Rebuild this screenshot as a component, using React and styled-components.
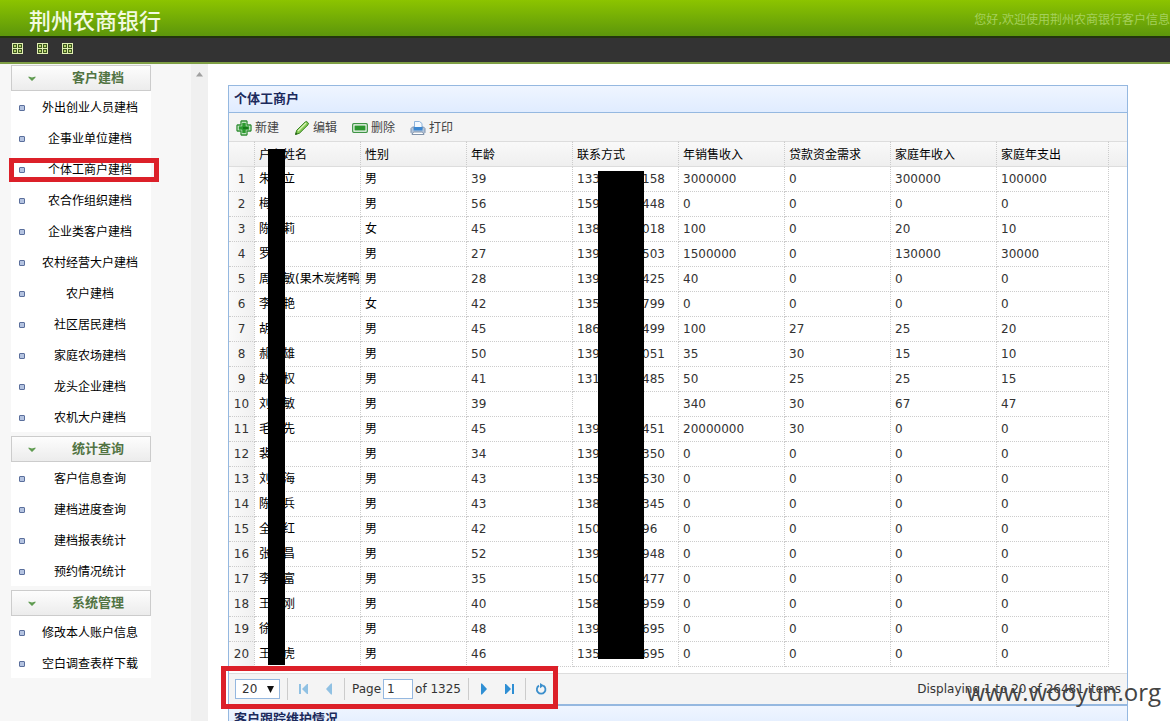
import React from "react";
import styled, { createGlobalStyle, css } from "styled-components";

const GlobalStyle = createGlobalStyle`
  *, *::before, *::after { box-sizing: border-box; }
  html, body, #root { height: 100%; }
  body {
    margin: 0;
    overflow: hidden;
    background: #fff;
    color: #000;
    font-family: "DejaVu Sans", "Noto Sans CJK SC", sans-serif;
    font-size: 12px;
    line-height: 16px;
  }
  button, input, select { font: inherit; color: inherit; }
`;

const Page = styled.div`
  position: relative;
  display: flex;
  flex-direction: column;
  height: 100%;
`;

const Banner = styled.header`
  display: flex;
  align-items: center;
  justify-content: space-between;
  height: 36px;
  padding-left: 29px;
  padding-top: 4px;
  flex: none;
  background: linear-gradient(#8cc400, #5c960b);
  white-space: nowrap;
`;

const Brand = styled.h1`
  margin: 0;
  padding-top: 4px;
  font-size: 22px;
  font-weight: 500;
  line-height: 24px;
  color: #f2fae0;
`;

const Greeting = styled.span`
  color: #a5d05c;
`;

const Strip = styled.nav`
  display: flex;
  align-items: center;
  gap: 14px;
  height: 28px;
  padding-left: 12px;
  padding-bottom: 3px;
  flex: none;
  background: #333;
  border-top: 2px solid #22340f;
  border-bottom: 2px solid #7f9f45;
`;

const IconButton = styled.button`
  display: flex;
  padding: 0;
  border: 0;
  background: none;
  cursor: pointer;
`;

const Body = styled.div`
  display: flex;
  flex: 1;
  min-height: 0;
`;

const Sidebar = styled.aside`
  display: flex;
  flex-direction: column;
  gap: 4px;
  width: 191px;
  padding: 1px 40px 0 11px;
  flex: none;
  background: #f7f7f7;
`;

const ScrollTrack = styled.div`
  display: flex;
  justify-content: center;
  width: 17px;
  padding-top: 8px;
  flex: none;
  background: #f0f0f0;
`;

const GroupHeader = styled.button`
  display: flex;
  align-items: center;
  gap: 36px;
  width: 100%;
  height: 26px;
  padding: 0 0 0 16px;
  border: 1px solid #ccc;
  background: linear-gradient(#fdfdfd, #ececec);
  color: #527443;
  font-size: 13px;
  font-weight: bold;
  text-align: left;
`;

const MenuList = styled.ul`
  margin: 0;
  padding: 0;
  list-style: none;
  background: #fff;
`;

const MenuItem = styled.li`
  position: relative;
  display: flex;
  align-items: center;
  height: 31px;
  padding-top: 2px;
  padding-left: 8px;
`;

const Bullet = styled.span`
  width: 6px;
  height: 6px;
  border: 1px solid #5b6f9c;
  border-radius: 1px;
  background: #b4c3e0;
`;

const MenuLink = styled.a`
  flex: 1;
  padding-left: 4px;
  color: #000;
  text-align: center;
  text-decoration: none;
`;

const highlight = css`
  position: absolute;
  border: 5px solid #dc2029;
  pointer-events: none;
`;

const MenuHighlight = styled.span`
  ${highlight}
  top: 5px;
  left: -2px;
  width: 150px;
  height: 24px;
`;

const PagerHighlight = styled.span`
  ${highlight}
  top: -8px;
  left: -8px;
  width: 337px;
  height: 43px;
`;

const Main = styled.main`
  flex: 1;
  min-width: 0;
  padding: 21px 42px 0 20px;
`;

const Panel = styled.section`
  border: 1px solid #95b8e0;
  border-top-width: ${(p) => (p.$joined ? 0 : 1)}px;
`;

const PanelTitle = styled.h2`
  height: 27px;
  margin: 0;
  padding: 5px 5px;
  border-bottom: 1px solid #95b8e0;
  background: linear-gradient(#eff5ff, #e0ecff);
  color: #1c2a5c;
  font-size: 13px;
  font-weight: bold;
  line-height: 16px;
`;

const Toolbar = styled.div`
  display: flex;
  align-items: center;
  gap: 15px;
  height: 28px;
  padding-top: 1px;
  padding-left: 7px;
  background: #f4f4f4;
`;

const ToolButton = styled.button`
  display: flex;
  align-items: center;
  gap: 3px;
  padding: 0;
  border: 0;
  background: none;
  color: #444;
  cursor: pointer;
`;

const GridWrap = styled.div`
  position: relative;
  padding-bottom: 6px;
`;

const Grid = styled.table`
  width: 100%;
  table-layout: fixed;
  border-collapse: separate;
  border-spacing: 0;
`;

const Col = styled.col`
  width: ${(p) => (p.$w ? `${p.$w}px` : "auto")};
`;

const HeadCell = styled.th`
  height: 26px;
  padding: 2px 4px 0;
  border-top: 1px solid #ddd;
  border-bottom: 1px solid #ddd;
  border-right: ${(p) => (p.$last ? "0" : "1px dotted #ccc")};
  background: linear-gradient(#f9f9f9, #efefef);
  font-weight: normal;
  text-align: left;
  white-space: nowrap;
`;

const Cell = styled.td`
  height: 25px;
  padding: 0 0 0 4px;
  border-right: 1px dotted #ccc;
  border-bottom: 1px dotted #ccc;
  overflow: hidden;
  white-space: nowrap;
`;

const NumberCell = styled(Cell)`
  padding: 0;
  background: linear-gradient(90deg, #fafafa, #f0f0f0);
  color: #333;
  text-align: center;
`;

const ValueCell = styled(Cell)`
  color: #333;
`;

const BlankCell = styled.td`
  padding: 0;
`;

const Phone = styled.span`
  display: flex;
  justify-content: space-between;
  width: 88px;
`;

const NameMask = styled.span`
  position: absolute;
  top: 8px;
  bottom: 8px;
  left: 39px;
  width: 17px;
  background: #000;
`;

const PhoneMask = styled.span`
  position: absolute;
  top: 30px;
  bottom: 14px;
  left: 369px;
  width: 46px;
  background: #000;
`;

const Pager = styled.div`
  position: relative;
  display: flex;
  align-items: center;
  height: 32px;
  padding: 0 6px;
  border-top: 1px solid #ddd;
  border-bottom: 1px solid #95b8e0;
  background: #f4f4f4;
  color: #333;
`;

const SizeSelect = styled.span`
  position: relative;
  display: flex;
  align-items: center;
  svg {
    position: absolute;
    right: 6px;
    pointer-events: none;
  }
`;

const Select = styled.select`
  width: 45px;
  height: 20px;
  padding: 0 6px;
  border: 1px solid #95b8e0;
  border-radius: 0;
  background: #fff;
  appearance: none;
`;

const Divider = styled.span`
  width: 1px;
  height: 22px;
  margin: 0 7px;
  background: #ccc;
`;

const PagerButton = styled(IconButton)`
  justify-content: center;
  width: 16px;
  opacity: ${(p) => (p.disabled ? 0.5 : 1)};
  & + & { margin-left: 10px; }
`;

const PageLabel = styled.label`
  display: flex;
  align-items: center;
  gap: 2px;
`;

const PageInput = styled.input`
  width: 30px;
  height: 20px;
  padding: 0 3px;
  border: 1px solid #95b8e0;
  background: #fff;
`;

const Summary = styled.span`
  margin-left: auto;
`;

const Watermark = styled.div`
  position: absolute;
  right: 9px;
  bottom: 12px;
  color: #444;
  font-family: "Open Sans", sans-serif;
  font-size: 24px;
  line-height: 34px;
  pointer-events: none;
`;

const MENU = [
  {
    title: "客户建档",
    items: [
      "外出创业人员建档",
      "企事业单位建档",
      "个体工商户建档",
      "农合作组织建档",
      "企业类客户建档",
      "农村经营大户建档",
      "农户建档",
      "社区居民建档",
      "家庭农场建档",
      "龙头企业建档",
      "农机大户建档",
    ],
  },
  {
    title: "统计查询",
    items: ["客户信息查询", "建档进度查询", "建档报表统计", "预约情况统计"],
  },
  { title: "系统管理", items: ["修改本人账户信息", "空白调查表样下载"] },
];

const ACTIVE_ITEM = "个体工商户建档";

const COLUMNS = [
  ["户主姓名", 106],
  ["性别", 106],
  ["年龄", 106],
  ["联系方式", 106],
  ["年销售收入", 106],
  ["贷款资金需求", 106],
  ["家庭年收入", 106],
  ["家庭年支出", 112],
];

// name, gender, age, [phone prefix, phone suffix], sales, loan, income, spending
const ROWS = [
  ["朱\u3000立", "男", 39, ["133", "158"], 3000000, 0, 300000, 100000],
  ["梅", "男", 56, ["159", "448"], 0, 0, 0, 0],
  ["陈\u3000莉", "女", 45, ["138", "018"], 100, 0, 20, 10],
  ["罗", "男", 27, ["139", "503"], 1500000, 0, 130000, 30000],
  ["周\u3000敏(果木炭烤鸭", "男", 28, ["139", "425"], 40, 0, 0, 0],
  ["李\u3000艳", "女", 42, ["135", "799"], 0, 0, 0, 0],
  ["胡", "男", 45, ["186", "499"], 100, 27, 25, 20],
  ["郝\u3000雄", "男", 50, ["139", "051"], 35, 30, 15, 10],
  ["赵\u3000权", "男", 41, ["131", "485"], 50, 25, 25, 15],
  ["刘\u3000敏", "男", 39, ["", ""], 340, 30, 67, 47],
  ["毛\u3000先", "男", 45, ["139", "451"], 20000000, 30, 0, 0],
  ["裴", "男", 34, ["139", "350"], 0, 0, 0, 0],
  ["刘\u3000海", "男", 43, ["135", "530"], 0, 0, 0, 0],
  ["陈\u3000兵", "男", 43, ["138", "345"], 0, 0, 0, 0],
  ["全\u3000红", "男", 42, ["150", "96\u2007"], 0, 0, 0, 0],
  ["张\u3000昌", "男", 52, ["139", "948"], 0, 0, 0, 0],
  ["李\u3000富", "男", 35, ["150", "477"], 0, 0, 0, 0],
  ["王\u3000刚", "男", 40, ["158", "959"], 0, 0, 0, 0],
  ["徐", "男", 48, ["139", "695"], 0, 0, 0, 0],
  ["王\u3000虎", "男", 46, ["135", "695"], 0, 0, 0, 0],
];

const GridIcon = () => (
  <svg width="11" height="11" viewBox="0 0 11 11" shapeRendering="crispEdges">
    <rect width="11" height="11" fill="#e2f0b4" />
    <path d="M1 1h4v4H1zM6 1h4v4H6zM1 6h4v4H1zM6 6h4v4H6z" fill="#40591f" />
    <path d="M2 2h2v2H2zM7 2h2v2H7zM2 7h2v2H2zM7 7h2v2H7z" fill="#b5d46c" />
  </svg>
);

const ChevronIcon = () => (
  <svg width="8" height="5" viewBox="0 0 8 5">
    <path d="M0.500 0.500L4 1.500l3.500-1v1L4 5 0.500 1.500z" fill="#5f9b50" />
  </svg>
);

const AddIcon = () => (
  <svg width="16" height="16" viewBox="0 0 16 16">
    <path
      d="M5.500 1h5l.500.500V5h3.500l.500.500v5l-.500.500H11v3.500l-.500.500h-5L5 14.500V11H1.500L1 10.500v-5L1.500 5H5V1.500z"
      fill="#e9f8e9"
      stroke="#2f8d32"
      strokeWidth="1.300"
    />
    <path d="M6.200 2.700h3.600v3.500h3.500v3.600H9.800v3.500H6.200V9.800H2.700V6.200h3.500z" fill="#2b9a2e" />
    <path d="M7 7h5v2H7z" fill="#17791b" />
  </svg>
);

const EditIcon = () => (
  <svg width="16" height="16" viewBox="0 0 16 16">
    <path d="M1.500 14.500l1.200-4.200L11.200 2l1.500-.500 1.800 1.800-.500 1.500-8.500 8.400z" fill="#86ca55" stroke="#33811f" />
    <path d="M4 11l8-8" stroke="#d8f3b8" strokeWidth="1.300" />
    <path d="M1.200 14.800l.7-2.500 1.800 1.800z" fill="#255c17" />
  </svg>
);

const RemoveIcon = () => (
  <svg width="16" height="16" viewBox="0 0 16 16">
    <rect x=".7" y="3.700" width="14.600" height="8.600" rx="1" fill="#fff" stroke="#3f9445" strokeWidth="1.300" />
    <rect x="2.500" y="5.500" width="11" height="5" fill="#2b962e" />
  </svg>
);

const PrintIcon = () => (
  <svg width="16" height="16" viewBox="0 0 16 16">
    <path d="M4.500 9V1.500h5l2.500 2V9" fill="#f3f9ff" stroke="#8eb4dc" />
    <path d="M1 8.500L2.500 7H4v2h8V7h1.500L15 8.500v4l-1 1H2l-1-1z" fill="#b4c6dc" stroke="#7f93ae" />
    <path d="M4 7h8.500v3.500h-9z" fill="#3c87d0" />
    <path d="M3.500 12h9l1.500 2.500H2z" fill="#fff" stroke="#8193aa" />
  </svg>
);

const TOOLS = [
  ["新建", AddIcon],
  ["编辑", EditIcon],
  ["删除", RemoveIcon],
  ["打印", PrintIcon],
];

const ArrowIcon = ({ back, bar }) => (
  <svg width="10" height="12" viewBox="0 0 10 12">
    <g fill="#2f8fd4" transform={back ? "matrix(-1 0 0 1 10 0)" : undefined}>
      <path d={bar ? "M0 1h1l5 5-5 5H0z" : "M2 0.500h1l5 5.500-5 5.500H2z"} />
      {bar && <path d="M7 1h2v10H7z" />}
    </g>
  </svg>
);

const RefreshIcon = () => (
  <svg width="12" height="12" viewBox="0 0 12 12">
    <path d="M8.300 2.600A4.300 4.300 0 1 1 4 2.600" fill="none" stroke="#3c8fcc" strokeWidth="1.800" />
    <path d="M5 0l4 2.600-4 2.600z" fill="#3c8fcc" />
  </svg>
);

const MenuGroup = ({ title, items }) => (
  <section>
    <GroupHeader type="button">
      <ChevronIcon />
      {title}
    </GroupHeader>
    <MenuList>
      {items.map((item) => (
        <MenuItem key={item}>
          <Bullet />
          <MenuLink href="#">{item}</MenuLink>
          {item === ACTIVE_ITEM && <MenuHighlight />}
        </MenuItem>
      ))}
    </MenuList>
  </section>
);

const CustomerRow = ({ index, row }) => {
  const [name, gender, age, phone, ...amounts] = row;
  return (
    <tr>
      <NumberCell>{index}</NumberCell>
      <Cell>{name}</Cell>
      <Cell>{gender}</Cell>
      <ValueCell>{age}</ValueCell>
      <ValueCell>
        <Phone>
          <span>{phone[0]}</span>
          <span>{phone[1]}</span>
        </Phone>
      </ValueCell>
      {amounts.map((amount, i) => (
        <ValueCell key={i}>{amount}</ValueCell>
      ))}
      <BlankCell />
    </tr>
  );
};

export default function App() {
  return (
    <Page>
      <GlobalStyle />
      <Banner>
        <Brand>荆州农商银行</Brand>
        <Greeting>您好,欢迎使用荆州农商银行客户信息</Greeting>
      </Banner>
      <Strip>
        {["应用一", "应用二", "应用三"].map((label) => (
          <IconButton key={label} type="button" aria-label={label}>
            <GridIcon />
          </IconButton>
        ))}
      </Strip>
      <Body>
        <Sidebar>
          {MENU.map((group) => (
            <MenuGroup key={group.title} {...group} />
          ))}
        </Sidebar>
        <ScrollTrack>
          <svg width="7" height="5" viewBox="0 0 7 5">
            <path d="M3.500 0L7 4.500H0z" fill="#a0a0a0" />
          </svg>
        </ScrollTrack>
        <Main>
          <Panel>
            <PanelTitle>个体工商户</PanelTitle>
            <Toolbar>
              {TOOLS.map(([label, Icon]) => (
                <ToolButton key={label} type="button">
                  <Icon />
                  {label}
                </ToolButton>
              ))}
            </Toolbar>
            <GridWrap>
              <Grid>
                <colgroup>
                  <Col $w={26} />
                  {COLUMNS.map(([label, width]) => (
                    <Col key={label} $w={width} />
                  ))}
                  <Col />
                </colgroup>
                <thead>
                  <tr>
                    <HeadCell />
                    {COLUMNS.map(([label]) => (
                      <HeadCell key={label}>{label}</HeadCell>
                    ))}
                    <HeadCell $last />
                  </tr>
                </thead>
                <tbody>
                  {ROWS.map((row, i) => (
                    <CustomerRow key={i} index={i + 1} row={row} />
                  ))}
                </tbody>
              </Grid>
              <NameMask />
              <PhoneMask />
            </GridWrap>
            <Pager>
              <SizeSelect>
                <Select aria-label="Page size" defaultValue="20">
                  <option>20</option>
                </Select>
                <svg width="7" height="7" viewBox="0 0 7 7">
                  <path d="M0 0h7L3.500 7z" fill="#111" />
                </svg>
              </SizeSelect>
              <Divider />
              <PagerButton type="button" disabled aria-label="First page">
                <ArrowIcon back bar />
              </PagerButton>
              <PagerButton type="button" disabled aria-label="Previous page">
                <ArrowIcon back />
              </PagerButton>
              <Divider />
              <PageLabel>
                Page
                <PageInput type="text" defaultValue="1" />
                of 1325
              </PageLabel>
              <Divider />
              <PagerButton type="button" aria-label="Next page">
                <ArrowIcon />
              </PagerButton>
              <PagerButton type="button" aria-label="Last page">
                <ArrowIcon bar />
              </PagerButton>
              <Divider />
              <PagerButton type="button" aria-label="Refresh">
                <RefreshIcon />
              </PagerButton>
              <Summary>Displaying 1 to 20 of 26481 items</Summary>
              <PagerHighlight />
            </Pager>
          </Panel>
          <Panel $joined>
            <PanelTitle>客户跟踪维护情况</PanelTitle>
          </Panel>
        </Main>
      </Body>
      <Watermark>www.wooyun.org</Watermark>
    </Page>
  );
}
